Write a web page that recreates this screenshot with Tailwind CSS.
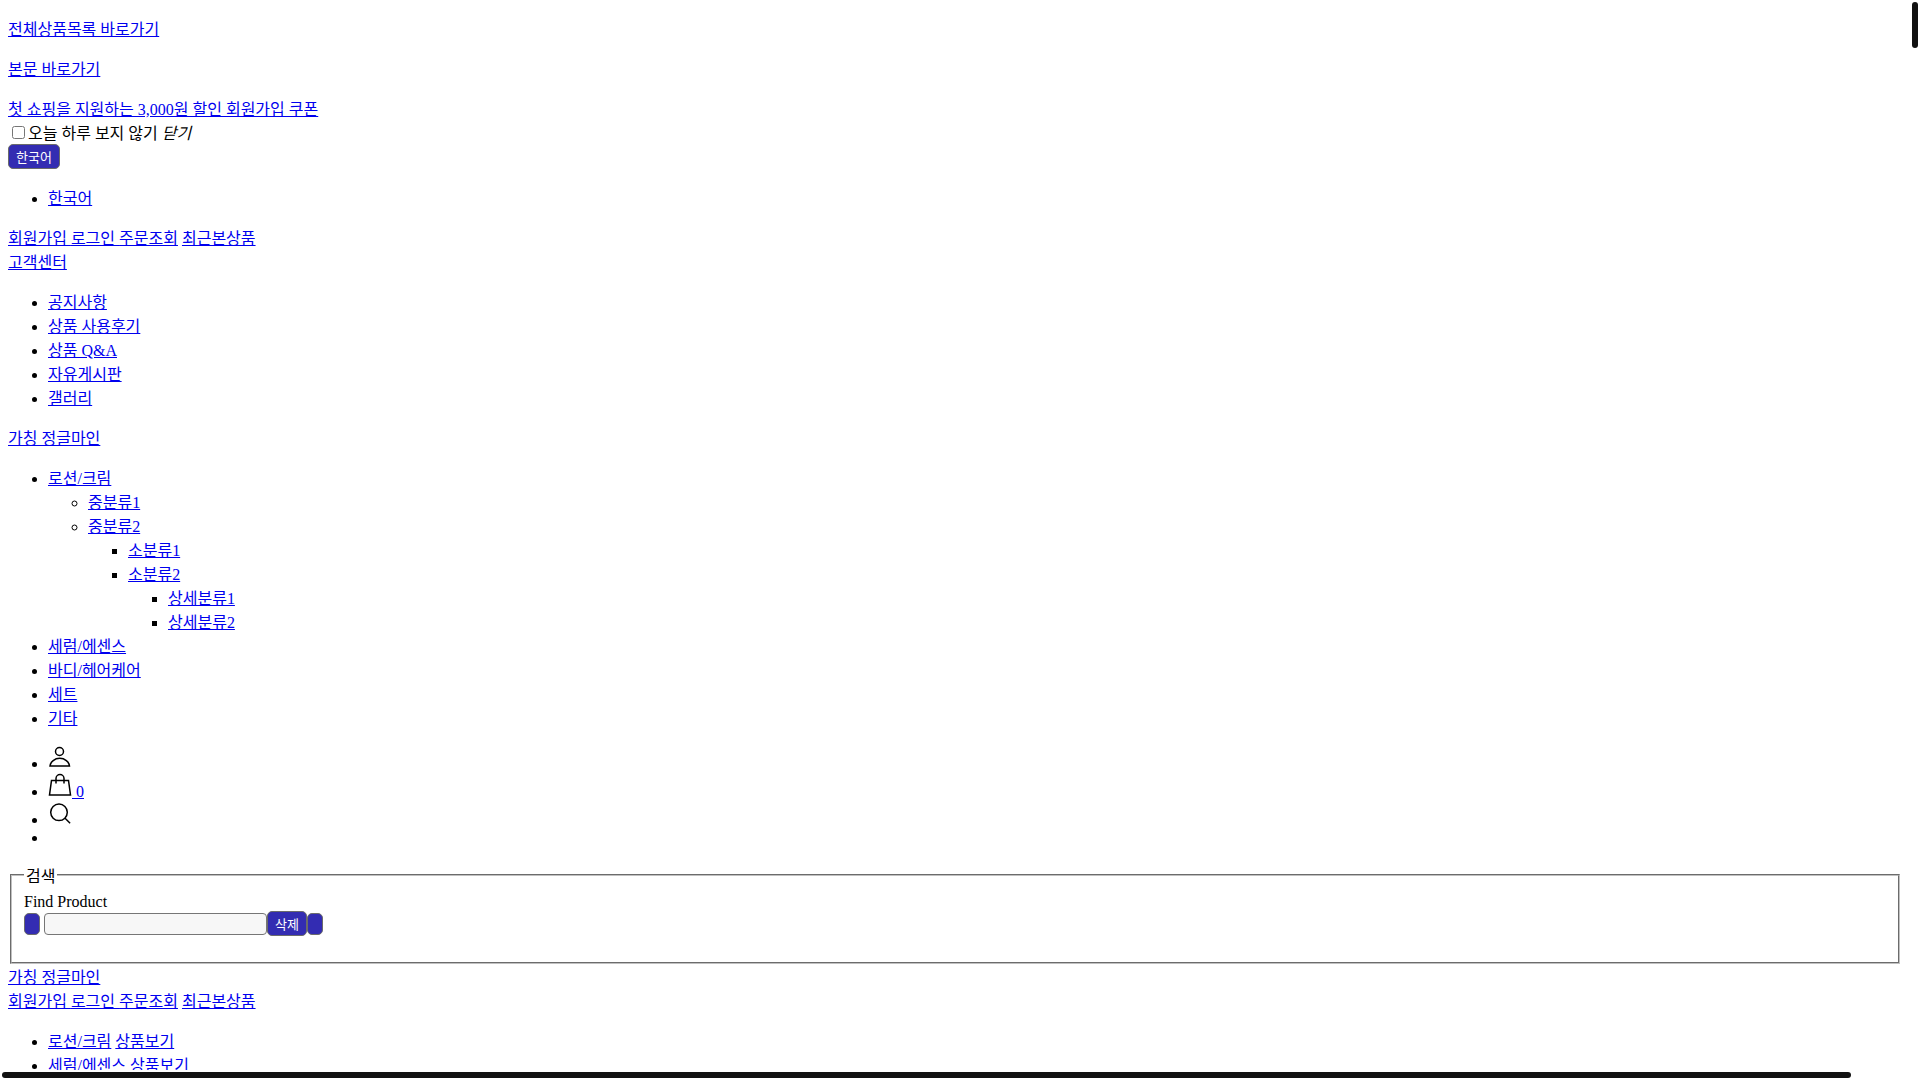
<!DOCTYPE html>
<html lang="ko">
<head>
<meta charset="utf-8">
<title>가칭 정글마인</title>
<script src="https://cdn.jsdelivr.net/npm/@tailwindcss/browser@4"></script>
</head>
<body class="grid h-screen grid-cols-[minmax(0,1fr)_10px] grid-rows-[minmax(0,1fr)_10px] overflow-hidden bg-white font-['Liberation_Serif','Noto_Sans_CJK_KR',serif] text-base leading-[normal] text-black [&_a]:text-[#0000ee] [&_a]:underline [&_button]:rounded-[5px] [&_button]:border [&_button]:border-[#6b6b6b] [&_button]:bg-[#332cb2] [&_button]:px-[7px] [&_button]:py-0.5 [&_button]:font-['Liberation_Sans','Noto_Sans_CJK_KR',sans-serif] [&_button]:text-[13px] [&_button]:leading-[normal] [&_button]:text-white [&_svg]:inline [&_svg]:align-baseline">
<main class="overflow-hidden px-2">
  <p class="my-4"><a href="#category">전체상품목록 바로가기</a></p>
  <p class="my-4"><a href="#contents">본문 바로가기</a></p>
  <div><a href="#">첫 쇼핑을 지원하는 3,000원 할인 회원가입 쿠폰</a></div>
  <div><input type="checkbox" id="today" class="mt-[3px] mr-[3px] mb-[3px] ml-1 size-[13px] align-baseline"><label for="today">오늘 하루 보지 않기</label> <em>닫기</em></div>
  <div class="flex"><button type="button">한국어</button></div>
  <ul class="my-4 list-disc pl-10">
    <li><a href="#">한국어</a></li>
  </ul>
  <div><a href="#">회원가입 </a><a href="#">로그인 </a><a href="#">주문조회</a> <a href="#">최근본상품</a></div>
  <div><a href="#">고객센터</a></div>
  <ul class="my-4 list-disc pl-10">
    <li><a href="#">공지사항</a></li>
    <li><a href="#">상품 사용후기</a></li>
    <li><a href="#">상품 Q&amp;A</a></li>
    <li><a href="#">자유게시판</a></li>
    <li><a href="#">갤러리</a></li>
  </ul>
  <div><a href="#">가칭 정글마인</a></div>
  <ul id="category" class="my-4 list-disc pl-10">
    <li><a href="#">로션/크림</a>
      <ul class="list-[circle] pl-10">
        <li><a href="#">중분류1</a></li>
        <li><a href="#">중분류2</a>
          <ul class="list-[square] pl-10">
            <li><a href="#">소분류1</a></li>
            <li><a href="#">소분류2</a>
              <ul class="list-[square] pl-10">
                <li><a href="#">상세분류1</a></li>
                <li><a href="#">상세분류2</a></li>
              </ul>
            </li>
          </ul>
        </li>
      </ul>
    </li>
    <li><a href="#">세럼/에센스</a></li>
    <li><a href="#">바디/헤어케어</a></li>
    <li><a href="#">세트</a></li>
    <li><a href="#">기타</a></li>
  </ul>
  <ul class="my-4 list-disc pl-10">
    <li><a href="#" aria-label="마이페이지"><svg class="size-6" viewBox="0 0 24 24" fill="none" stroke="#000" stroke-width="1.5"><circle cx="11.5" cy="6.500" r="4"/><path d="M2 21a9.800 8.500 0 0 1 19.500 0z"/></svg></a></li>
    <li><a href="#"><svg class="size-6" viewBox="0 0 24 24" fill="none" stroke="#000" stroke-width="1.5"><path d="M3.500 7.500h17l2 14.500H1.500zM8 10.500V5.500a4 4 0 0 1 8 0v5"/></svg> 0</a></li>
    <li><a href="#" aria-label="검색"><svg class="size-6" viewBox="0 0 24 24" fill="none" stroke="#000" stroke-width="1.5"><circle cx="11" cy="11.300" r="8.300"/><path d="M16.800 17l5.300 5.300"/></svg></a></li>
    <li></li>
  </ul>
  <form>
    <fieldset class="mx-0.5 border-2 border-[#c0c0c0] px-3 pt-[6px] pb-[10px] [border-style:groove]">
      <legend class="px-0.5">검색</legend>
      <label for="keyword">Find Product</label>
      <div class="mb-4 flex items-center">
        <button type="button" aria-label="뒤로" class="h-[22px] w-4"></button>
        <input type="text" id="keyword" class="ml-1 h-[22px] w-[223px] rounded-[4px] border border-[#767676] bg-[#f7f7f7] px-1">
        <button type="button">삭제</button>
        <button type="submit" aria-label="검색" class="h-[22px] w-4"></button>
      </div>
    </fieldset>
  </form>
  <div id="contents"><a href="#">가칭 정글마인</a></div>
  <div><a href="#">회원가입 </a><a href="#">로그인 </a><a href="#">주문조회</a> <a href="#">최근본상품</a></div>
  <ul class="my-4 list-disc pl-10">
    <li><a href="#">로션/크림</a> <a href="#">상품보기</a></li>
    <li><a href="#">세럼/에센스</a> <a href="#">상품보기</a></li>
  </ul>
</main>
<div class="px-0.5 pt-0.5"><div class="h-[46px] rounded-full bg-[#111]"></div></div>
<div class="px-0.5 pt-0.5"><div class="h-1.5 w-[97%] rounded-full bg-[#111]"></div></div>
</body>
</html>
